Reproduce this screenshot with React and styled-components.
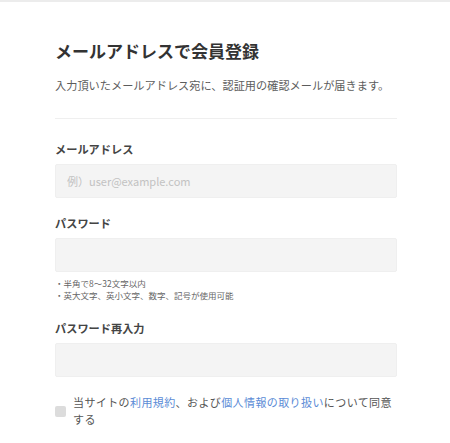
import React from "react";
import styled, { createGlobalStyle } from "styled-components";

const GlobalStyle = createGlobalStyle`
  body {
    margin: 0;
    background: #fff;
    font-family: "Noto Sans CJK JP", "Noto Sans", sans-serif;
    color: #333;
  }
`;

const Page = styled.div`
  border-top: 2px solid #ececec;
  padding: 40px 53px 20px 55px;
`;

const Title = styled.h1`
  margin: 0;
  font-size: 17px;
  line-height: 17px;
  font-weight: 700;
  color: #333;
`;

const Lead = styled.p`
  margin: 19px 0 0;
  font-size: 11.2px;
  line-height: 14px;
  color: #5c5c5c;
`;

const Divider = styled.hr`
  margin: 26px 0 0;
  border: none;
  border-top: 1px solid #efefef;
`;

const Form = styled.form`
  display: flex;
  flex-direction: column;
  padding-top: 23px;
`;

const Field = styled.div`
  display: flex;
  flex-direction: column;
  margin-bottom: ${props => props.gap || 18}px;
`;

const Label = styled.label`
  font-size: 11.2px;
  line-height: 14px;
  font-weight: 700;
  color: #444;
  margin-bottom: 8px;
`;

const Input = styled.input`
  box-sizing: border-box;
  height: 34px;
  padding: 0 11px;
  background: #f4f4f4;
  border: 1px solid #efefef;
  border-radius: 2px;
  font-family: inherit;
  font-size: 11px;
  color: #333;
  outline: none;
  &::placeholder {
    color: #c2c2c2;
  }
`;

const Notes = styled.ul`
  list-style: none;
  margin: 6px 0 0;
  padding: 0;
  font-size: 8.5px;
  line-height: 11.5px;
  color: #666;
`;

const Agree = styled.div`
  display: flex;
  align-items: center;
  gap: 7px;
  margin-top: -1px;
`;

const Box = styled.span`
  flex: none;
  width: 11px;
  height: 11px;
  border-radius: 2px;
  background: #dcdcdc;
`;

const AgreeText = styled.span`
  font-size: 11px;
  letter-spacing: 0.4px;
  line-height: 17px;
  color: #555;
`;

const Link = styled.a`
  color: #5b8bd6;
  text-decoration: none;
`;

export default function App() {
  return (
    <>
      <GlobalStyle />
      <Page>
        <Title>メールアドレスで会員登録</Title>
        <Lead>入力頂いたメールアドレス宛に、認証用の確認メールが届きます。</Lead>
        <Divider />
        <Form>
          <Field>
            <Label>メールアドレス</Label>
            <Input type="email" placeholder="例）user@example.com" />
          </Field>
          <Field gap={20}>
            <Label>パスワード</Label>
            <Input type="password" />
            <Notes>
              <li>・半角で8～32文字以内</li>
              <li>・英大文字、英小文字、数字、記号が使用可能</li>
            </Notes>
          </Field>
          <Field>
            <Label>パスワード再入力</Label>
            <Input type="password" />
          </Field>
          <Agree>
            <Box />
            <AgreeText>
              当サイトの<Link href="#">利用規約</Link>、および
              <Link href="#">個人情報の取り扱い</Link>について同意する
            </AgreeText>
          </Agree>
        </Form>
      </Page>
    </>
  );
}
